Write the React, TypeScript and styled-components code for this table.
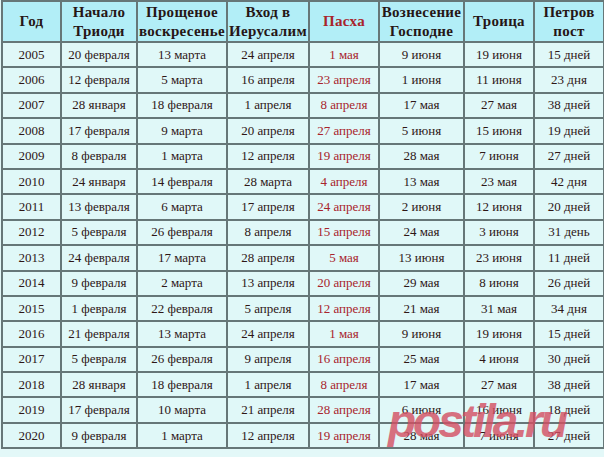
import React from 'react';
import styled, { createGlobalStyle } from 'styled-components';

const GlobalStyle = createGlobalStyle`
  html, body {
    margin: 0;
    padding: 0;
    background: #e3f8f8;
  }
`

const Page = styled.div`
  position: relative;
  width: 604px;
  height: 457px;
  overflow: hidden;
  padding: 0 0 0 1px;
  box-sizing: border-box;
`

const Table = styled.table`
  border-collapse: collapse;
  table-layout: fixed;
  width: 602px;
  border: 2px solid #667778;
`

const HeadRow = styled.tr`
  height: 41px;
`

const Row = styled.tr`
  height: 25.4px;
`

const HeadCell = styled.th<{ $accent?: boolean }>`
  background: #b2eef7;
  color: ${p => (p.$accent ? '#a8242c' : '#261616')};
  font-family: "Liberation Serif", "Times New Roman", serif;
  font-size: 15px;
  font-weight: bold;
  line-height: 19px;
  letter-spacing: 0.3px;
  text-align: center;
  padding: 0;
  border: 2px solid #667778;
  white-space: nowrap;
`

const Cell = styled.td<{ $accent?: boolean }>`
  background: #e0f8f8;
  color: ${p => (p.$accent ? '#a8242c' : '#2e1616')};
  font-family: "Liberation Serif", "Times New Roman", serif;
  font-size: 13px;
  text-align: center;
  padding: 0;
  border: 2px solid #667778;
  white-space: nowrap;
`

const Watermark = styled.div`
  position: absolute;
  left: 388px;
  top: 398px;
  font-family: "Liberation Sans", Arial, sans-serif;
  font-size: 46px;
  font-weight: bold;
  font-style: italic;
  letter-spacing: -3px;
  line-height: 1;
  color: #d44f62;
  opacity: 0.8;
  pointer-events: none;
`

const widths = [59, 76, 90, 82, 70, 85, 70, 70];

const headers: { lines: string[]; accent?: boolean }[] = [
  { lines: ['Год'] },
  { lines: ['Начало', 'Триоди'] },
  { lines: ['Прощеное', 'воскресенье'] },
  { lines: ['Вход в', 'Иерусалим'] },
  { lines: ['Пасха'], accent: true },
  { lines: ['Вознесение', 'Господне'] },
  { lines: ['Троица'] },
  { lines: ['Петров', 'пост'] },
];

const rows: string[][] = [
  ['2005', '20 февраля', '13 марта', '24 апреля', '1 мая', '9 июня', '19 июня', '15 дней'],
  ['2006', '12 февраля', '5 марта', '16 апреля', '23 апреля', '1 июня', '11 июня', '23 дня'],
  ['2007', '28 января', '18 февраля', '1 апреля', '8 апреля', '17 мая', '27 мая', '38 дней'],
  ['2008', '17 февраля', '9 марта', '20 апреля', '27 апреля', '5 июня', '15 июня', '19 дней'],
  ['2009', '8 февраля', '1 марта', '12 апреля', '19 апреля', '28 мая', '7 июня', '27 дней'],
  ['2010', '24 января', '14 февраля', '28 марта', '4 апреля', '13 мая', '23 мая', '42 дня'],
  ['2011', '13 февраля', '6 марта', '17 апреля', '24 апреля', '2 июня', '12 июня', '20 дней'],
  ['2012', '5 февраля', '26 февраля', '8 апреля', '15 апреля', '24 мая', '3 июня', '31 день'],
  ['2013', '24 февраля', '17 марта', '28 апреля', '5 мая', '13 июня', '23 июня', '11 дней'],
  ['2014', '9 февраля', '2 марта', '13 апреля', '20 апреля', '29 мая', '8 июня', '26 дней'],
  ['2015', '1 февраля', '22 февраля', '5 апреля', '12 апреля', '21 мая', '31 мая', '34 дня'],
  ['2016', '21 февраля', '13 марта', '24 апреля', '1 мая', '9 июня', '19 июня', '15 дней'],
  ['2017', '5 февраля', '26 февраля', '9 апреля', '16 апреля', '25 мая', '4 июня', '30 дней'],
  ['2018', '28 января', '18 февраля', '1 апреля', '8 апреля', '17 мая', '27 мая', '38 дней'],
  ['2019', '17 февраля', '10 марта', '21 апреля', '28 апреля', '6 июня', '16 июня', '18 дней'],
  ['2020', '9 февраля', '1 марта', '12 апреля', '19 апреля', '28 мая', '7 июня', '27 дней'],
];

// колонка "Пасха" выделена красным
const EASTER = 4;

const App = () => {
  return (
    <Page>
      <GlobalStyle />
      <Table>
        <colgroup>
          {widths.map((w, i) => (
            <col key={i} style={{ width: w }} />
          ))}
        </colgroup>
        <thead>
          <HeadRow>
            {headers.map((h, i) => (
              <HeadCell key={i} $accent={!!h.accent}>
                {h.lines.map((l, j) => (
                  <React.Fragment key={j}>
                    {j > 0 && <br />}
                    {l}
                  </React.Fragment>
                ))}
              </HeadCell>
            ))}
          </HeadRow>
        </thead>
        <tbody>
          {rows.map(r => (
            <Row key={r[0]}>
              {r.map((c, i) => (
                <Cell key={i} $accent={i === EASTER}>{c}</Cell>
              ))}
            </Row>
          ))}
        </tbody>
      </Table>
      <Watermark>postila.ru</Watermark>
    </Page>
  );
}

export default App;
